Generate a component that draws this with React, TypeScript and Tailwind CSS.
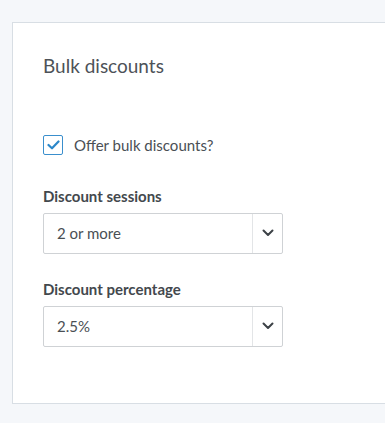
import { useState } from 'react'

function Chevron() {
  return (
    <svg width="12" height="8" viewBox="0 0 12 8" fill="none">
      <path d="M1.5 1.5 6 6l4.5-4.5" stroke="#3d4247" strokeWidth="2" strokeLinecap="round" strokeLinejoin="round" />
    </svg>
  )
}

function SelectBox({ value }: { value: string }) {
  return (
    <div className="flex h-[41px] w-[240px] items-stretch border border-[#cfd2d5] rounded-[2px] bg-white">
      <div className="flex-1 flex items-center pl-[13px] text-[15px] text-[#4a4f54]">{value}</div>
      <div className="w-[30px] flex items-center justify-center border-l border-[#e3e5e7]">
        <Chevron />
      </div>
    </div>
  )
}

export default function App() {
  const [offer, setOffer] = useState(true)

  return (
    <div className="h-[423px] bg-[#f5f7fa] pt-[22px] pl-[12px] overflow-hidden" style={{ fontFamily: 'Lato, "Open Sans", sans-serif' }}>
      <div className="h-[382px] bg-white border border-r-0 border-[#d8dee4] px-[30px] pt-[31px]">
        <h2 className="text-[19px] leading-[24px] text-[#4d5258]">Bulk discounts</h2>

        <label className="mt-[56px] flex items-center gap-[11px] cursor-pointer" onClick={() => setOffer(!offer)}>
          <span className="w-[20px] h-[20px] border border-[#3a8fcd] rounded-[2px] flex items-center justify-center bg-white">
            {offer && (
              <svg width="13" height="10" viewBox="0 0 13 10" fill="none">
                <path d="M1.5 5 5 8.3 11.5 1.5" stroke="#2b87c9" strokeWidth="2.2" strokeLinecap="round" strokeLinejoin="round" />
              </svg>
            )}
          </span>
          <span className="text-[15px] text-[#4a4f55]">Offer bulk discounts?</span>
        </label>

        <div className="mt-[29px]">
          <p className="text-[15px] font-bold leading-[20px] text-[#43484d] mb-[7px]">Discount sessions</p>
          <SelectBox value="2 or more" />
        </div>

        <div className="mt-[25px]">
          <p className="text-[15px] font-bold leading-[20px] text-[#43484d] mb-[7px]">Discount percentage</p>
          <SelectBox value="2.5%" />
        </div>
      </div>
    </div>
  )
}
